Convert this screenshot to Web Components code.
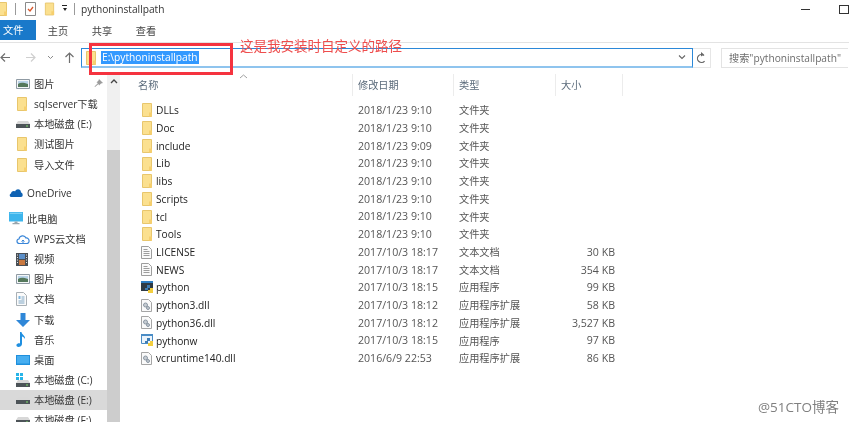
<!DOCTYPE html>
<html lang="zh">
<head>
<meta charset="utf-8">
<title>pythoninstallpath</title>
<style>
html, body { margin: 0; height: 422px; overflow: hidden; background: #fff; }
body { font: 10.200px/1 "Open Sans", "Noto Sans CJK SC", sans-serif; color: #222; }
</style>
</head>
<body>
<x-explorer>
  <x-titlebar slot="top">pythoninstallpath</x-titlebar>
  <x-tabs slot="top"></x-tabs>
  <x-address slot="top"></x-address>
  <x-nav slot="nav">
    <x-nav-item icon="pictures">图片<x-pin slot="end"></x-pin></x-nav-item>
    <x-nav-item icon="folder">sqlserver下载</x-nav-item>
    <x-nav-item icon="drive">本地磁盘 (E:)</x-nav-item>
    <x-nav-item icon="folder">测试图片</x-nav-item>
    <x-nav-item icon="folder">导入文件</x-nav-item>
    <x-nav-item icon="onedrive" level="0" gap="8">OneDrive</x-nav-item>
    <x-nav-item icon="pc" level="0" gap="6">此电脑</x-nav-item>
    <x-nav-item icon="cloud">WPS云文档</x-nav-item>
    <x-nav-item icon="video">视频</x-nav-item>
    <x-nav-item icon="pictures">图片</x-nav-item>
    <x-nav-item icon="docs">文档</x-nav-item>
    <x-nav-item icon="download">下载</x-nav-item>
    <x-nav-item icon="music">音乐</x-nav-item>
    <x-nav-item icon="desktop">桌面</x-nav-item>
    <x-nav-item icon="sysdrive">本地磁盘 (C:)</x-nav-item>
    <x-nav-item icon="drive" selected>本地磁盘 (E:)</x-nav-item>
    <x-nav-item icon="drive">本地磁盘 (F:)</x-nav-item>
  </x-nav>
  <x-files slot="main">
    <x-file icon="folder" date="2018/1/23 9:10" type="文件夹">DLLs</x-file>
    <x-file icon="folder" date="2018/1/23 9:10" type="文件夹">Doc</x-file>
    <x-file icon="folder" date="2018/1/23 9:09" type="文件夹">include</x-file>
    <x-file icon="folder" date="2018/1/23 9:10" type="文件夹">Lib</x-file>
    <x-file icon="folder" date="2018/1/23 9:10" type="文件夹">libs</x-file>
    <x-file icon="folder" date="2018/1/23 9:10" type="文件夹">Scripts</x-file>
    <x-file icon="folder" date="2018/1/23 9:10" type="文件夹">tcl</x-file>
    <x-file icon="folder" date="2018/1/23 9:10" type="文件夹">Tools</x-file>
    <x-file icon="text" date="2017/10/3 18:17" type="文本文档" size="30 KB">LICENSE</x-file>
    <x-file icon="text" date="2017/10/3 18:17" type="文本文档" size="354 KB">NEWS</x-file>
    <x-file icon="python" date="2017/10/3 18:15" type="应用程序" size="99 KB">python</x-file>
    <x-file icon="dll" date="2017/10/3 18:12" type="应用程序扩展" size="58 KB">python3.dll</x-file>
    <x-file icon="dll" date="2017/10/3 18:12" type="应用程序扩展" size="3,527 KB">python36.dll</x-file>
    <x-file icon="pythonw" date="2017/10/3 18:15" type="应用程序" size="97 KB">pythonw</x-file>
    <x-file icon="dll" date="2016/6/9 22:53" type="应用程序扩展" size="86 KB">vcruntime140.dll</x-file>
  </x-files>
  <x-note slot="over">这是我安装时自定义的路径</x-note>
  <x-watermark slot="over">@51CTO博客</x-watermark>
</x-explorer>

<script>
'use strict';

const FOLDER = '<path d="M1.5 .5h9v13h-9z" fill="#fbe08f" stroke="#e8c66c"/><path d="M8 9.5h3v4H8z" fill="#f6cf6e"/>';

const ICONS = {
    folder: [12, 14, FOLDER],
    pictures: [14, 12, '<path d="M.5 1.5h13v9H.5z" fill="#f3f6f8" stroke="#8f9aa3"/><path d="M2 3h10v3H2z" fill="#b9d3e8"/><path d="M2 6c3-2 6-1 10 0v3H2z" fill="#55795c"/>'],
    drive: [14, 8, '<path d="M2 1h10l2 3H0z" fill="#d8d8d8"/><path d="M0 4h14v4H0z" fill="#4d5458"/><path d="M10 5.500h2v1h-2z" fill="#7fdc6a"/>'],
    sysdrive: [14, 14, '<path d="M0 0h3v3H0zM4 0h3v3H4zM0 4h3v3H0zM4 4h3v3H4z" fill="#27b4e8"/><path d="M2 7h10l2 3H0z" fill="#d8d8d8"/><path d="M0 10h14v4H0z" fill="#4d5458"/><path d="M10 11.500h2v1h-2z" fill="#7fdc6a"/>'],
    onedrive: [14, 9, '<path d="M2.500 9C.5 9 0 6.200 2 5.500 2.500 3 5 2.500 6 3.500 7.500 0 12 1 12 4.500c2 .2 2.500 4.500 0 4.500z" fill="#0f62b3"/>'],
    pc: [14, 13, '<path d="M0 0h14v9.500H0z" fill="#3db5ec"/><path d="M.8 .8h12.400v1H.8z" fill="#8ad7f7"/><path d="M5.500 9.500h3V11h-3zM3.500 11h7v1.200h-7z" fill="#9aa6ad"/>'],
    cloud: [14, 12, '<path d="M3.500 10.500C.5 10.500 0 6.500 3 6c.5-3.500 5.500-4.500 7-1 3.500-.5 4.500 5.500 .5 5.500z" fill="#fff" stroke="#3a86d8" stroke-width="1.200"/><path d="M7 11V7M5.500 8.500 7 7l1.500 1.500" fill="none" stroke="#3a86d8"/>'],
    video: [12, 13, '<path d="M0 0h12v13H0z" fill="#4a4f55"/><path d="M3 1h6v5H3z" fill="#5b8fc9"/><path d="M3 7h6v5H3z" fill="#c9783f"/><path d="M1 1.500h1v1H1zM1 4h1v1H1zM1 6.500h1v1H1zM1 9h1v1H1zM10 1.500h1v1h-1zM10 4h1v1h-1zM10 6.500h1v1h-1zM10 9h1v1h-1z" fill="#dfe3e6"/>'],
    docs: [11, 14, '<path d="M.5 .5h7l3 3v10H.5z" fill="#fbfbfb" stroke="#a9b0b5"/><path d="M2.500 4h2v3h-2z" fill="#7fb5dd"/><path d="M5.500 5h3M5.500 7h3M2.500 9h6M2.500 11h6" stroke="#7fa6c4"/>'],
    download: [14, 14, '<path d="M4.500 0h5v7H14l-7 7-7-7h4.500z" fill="#2f87d8"/>'],
    music: [10, 15, '<path d="M4 0h1.500c.3 3 4 3.500 3.500 7-.8-1.500-2-2.200-3-2.500V12c0 2-2 3-3.500 3S0 14 .5 12.800C1 11.500 3 11 4 11.500z" fill="#1f8fe0"/>'],
    desktop: [14, 10, '<path d="M0 0h14v10H0z" fill="#1f8fdc"/><path d="M1 1h12v7.500H1z" fill="#47aef0"/>'],
    text: [11, 13, '<path d="M.5 .5h7l3 3v9H.5z" fill="#fafafa" stroke="#9d9d9d"/><path d="M2.500 3.500h4M2.500 5.500h6M2.500 7.500h6M2.500 9.500h6" stroke="#9d9d9d"/>'],
    dll: [11, 13, '<path d="M.5 .5h7l3 3v9H.5z" fill="#fafafa" stroke="#a5a5a5"/><circle cx="4.500" cy="6" r="2" fill="#c6ccd2" stroke="#8b97a3"/><circle cx="7" cy="9" r="1.500" fill="#c6ccd2" stroke="#8b97a3"/>'],
    python: [13, 13, '<path d="M0 0h12v10H0z" fill="#2f3b44"/><path d="M0 0h12v2H0z" fill="#2f7fc4"/><path d="M6 4h3v3H7v2H4V7h2z" fill="#3d7cb4"/><path d="M9 7h3v5H7V9h2z" fill="#f3ce3f"/>'],
    pythonw: [13, 13, '<path d="M.5 .5h11v9H.5z" fill="#eaf3fb" stroke="#4a8cc5"/><path d="M0 0h12v2H0z" fill="#4a8cc5"/><path d="M6 4h3v3H7v2H4V7h2z" fill="#3d7cb4"/><path d="M9 7h3v5H7V9h2z" fill="#f3ce3f"/>'],
};

function icon_svg(name) {
    const [w, h, body] = ICONS[name];
    return `<svg width="${w}" height="${h}" viewBox="0 0 ${w} ${h}" aria-hidden="true">${body}</svg>`;
}

// every element below is the same shape: markup + style in an open shadow root
function define(tag, render) {
    customElements.define(
        tag,
        class extends HTMLElement {
            connectedCallback() {
                if (this.shadowRoot) return;
                this.attachShadow({ mode: 'open' }).innerHTML = render(this);
            }
        }
    );
}

define('x-explorer', () => `
<style>
:host { display: block; position: relative; width: 849px; height: 422px; overflow: hidden; filter: blur(.3px); }
.body { display: flex; height: 348px; }
</style>
<slot name="top"></slot>
<div class="body"><slot name="nav"></slot><slot name="main"></slot></div>
<slot name="over"></slot>`);

define('x-titlebar', () => `
<style>
:host { display: flex; align-items: center; height: 18px; color: #333; }
.sep { width: 1px; height: 12px; background: #9a9a9a; }
.caret { width: 5px; height: 2px; border-top: 1px solid #222; }
.arrow { width: 0; height: 0; border: 2.500px solid transparent; border-top: 3px solid #222; }
.min { width: 9px; height: 1px; background: #333; margin-left: auto; }
.max { width: 8px; height: 7px; border: 1px solid #333; margin: 0 0 0 29px; flex: none; }
svg { flex: none; display: block; }
</style>
<svg width="9" height="14" viewBox="3 0 9 14" style="margin-left:-1px">${FOLDER}</svg>
<span class="sep" style="margin-left:7px"></span>
<svg width="11" height="14" viewBox="0 0 11 14" style="margin-left:9px"><path d="M.5 .5h10v13H.5z" fill="#fff" stroke="#8a8a8a"/><path d="M3 7l2 2 3-4" fill="none" stroke="#d9572b" stroke-width="1.300"/></svg>
<svg width="11" height="14" viewBox="0 0 12 14" style="margin-left:8px">${FOLDER}</svg>
<span style="margin-left:7px;display:flex;flex-direction:column;align-items:center"><span class="caret"></span><span class="arrow"></span></span>
<span class="sep" style="margin-left:7px"></span>
<span style="margin-left:6px"><slot></slot></span>
<span class="min"></span><span class="max"></span>`);

define('x-tabs', () => `
<style>
:host { display: flex; align-items: stretch; height: 24px; border-bottom: 1px solid #e3e3e3; color: #444; }
.file { width: 36px; height: 20px; margin-top: 2px; background: #1979ca; color: #fff; display: flex; align-items: center; padding-left: 3px; box-sizing: border-box; }
.tab { width: 44px; display: flex; align-items: center; justify-content: center; padding-top: 2px; height: 22px; }
</style>
<div class="file">文件</div>
<div class="tab">主页</div>
<div class="tab">共享</div>
<div class="tab">查看</div>`);

define('x-address', () => `
<style>
:host { display: flex; align-items: center; height: 31px; box-sizing: border-box; padding-bottom: 1px; }
.nav { width: 81px; flex: none; display: flex; align-items: center; height: 20px; position: relative; }
.nav svg { position: absolute; }
.box { flex: none; width: 612px; height: 20px; box-sizing: border-box; border: 1px solid #2b88d8; border-bottom: 2px solid #8fc4ee; display: flex; align-items: center; justify-content: space-between; padding: 0 6px 0 3px; }
.path { display: flex; align-items: center; gap: 4px; }
.sel { background: #3399ff; color: #fff; padding: 0 1px; height: 13px; line-height: 13px; }
.refresh { flex: none; width: 18px; height: 20px; border: 1px solid #e6e6e6; border-left: 0; box-sizing: border-box; display: flex; align-items: center; justify-content: center; }
.search { flex: none; margin-left: 10px; width: 127px; height: 20px; border: 1px solid #e3e3e3; border-right: 0; box-sizing: border-box; padding-left: 7px; display: flex; align-items: center; color: #6d6d6d; white-space: nowrap; }
</style>
<div class="nav">
  <svg style="left:0;top:4px" width="11" height="11" viewBox="0 0 11 11"><path d="M10 5.500H1M5 1.500l-4 4 4 4" fill="none" stroke="#6f6f6f" stroke-width="1.200"/></svg>
  <svg style="left:25px;top:4px" width="11" height="11" viewBox="0 0 11 11"><path d="M1 5.500h9M6 1.500l4 4-4 4" fill="none" stroke="#cfcfcf" stroke-width="1.200"/></svg>
  <svg style="left:47px;top:7px" width="7" height="5" viewBox="0 0 7 5"><path d="M1 1l2.500 2.500L6 1" fill="none" stroke="#8a8a8a"/></svg>
  <svg style="left:64px;top:4px" width="11" height="11" viewBox="0 0 11 11"><path d="M5.500 11V1M1.500 5l4-4 4 4" fill="none" stroke="#6f6f6f" stroke-width="1.200"/></svg>
</div>
<div class="box">
  <div class="path">
    <svg width="12" height="14" viewBox="0 0 12 14">${FOLDER}</svg>
    <span class="sel">E:\\pythoninstallpath</span>
  </div>
  <svg width="8" height="5" viewBox="0 0 8 5"><path d="M1 .5l3 3 3-3" fill="none" stroke="#666" stroke-width="1.100"/></svg>
</div>
<div class="refresh"><svg width="11" height="12" viewBox="0 0 11 12"><path d="M5.500 2.500a4 4 0 1 0 4 4" fill="none" stroke="#666" stroke-width="1.200" transform="rotate(40 5.500 6.500)"/><path d="M5 0l3 2.500L5 4.500z" fill="#666"/></svg></div>
<div class="search">搜索"pythoninstallpath"</div>`);

define('x-nav', () => `
<style>
:host { display: flex; flex: none; width: 120px; height: 348px; }
.items { width: 107px; overflow: hidden; }
.bar { width: 13px; background: #f0f0f0; position: relative; }
.bar svg { position: absolute; left: 3px; top: 5px; }
.thumb { position: absolute; left: 0; right: 0; top: 76px; bottom: 0; background: #cdcdcd; }
</style>
<div class="items"><slot></slot></div>
<div class="bar"><svg width="8" height="5" viewBox="0 0 8 5"><path d="M1 4l3-3 3 3" fill="none" stroke="#444" stroke-width="1.300"/></svg><div class="thumb"></div></div>`);

define('x-nav-item', el => {
    const top_level = el.getAttribute('level') === '0';
    const gap = el.getAttribute('gap') || 0;
    const bg = el.hasAttribute('selected') ? '#d9d9d9' : 'transparent';
    return `
<style>
:host { display: flex; align-items: center; height: 20.150px; margin-top: ${gap}px; background: ${bg}; color: #333; white-space: nowrap; position: relative; }
.ic { flex: none; width: ${top_level ? 27 : 34}px; padding-left: ${top_level ? 9 : 16}px; box-sizing: border-box; display: flex; align-items: center; }
svg { display: block; }
::slotted([slot=end]) { position: absolute; right: 4px; top: 5px; }
</style>
<span class="ic">${icon_svg(el.getAttribute('icon'))}</span><slot></slot><slot name="end"></slot>`;
});

define('x-pin', () => `
<style>:host { display: block; width: 9px; height: 9px; }</style>
<svg width="9" height="9" viewBox="0 0 9 9"><path d="M5 0l4 4-2 .5-2 2-.5-1.500L1 8 .5 7.500 4 4 2.500 3.500l2-2z" fill="#9b9b9b"/></svg>`);

define('x-files', () => `
<style>
:host { display: block; flex: none; width: 729px; }
.head { display: grid; grid-template-columns: 233px 101px 102px 67px; height: 22px; margin-bottom: 5.500px; color: #5b6b7b; position: relative; }
.head div { display: flex; align-items: center; padding-left: 5px; box-sizing: border-box; border-right: 1px solid #ececec; }
.head div:first-child { padding-left: 18px; }
.sort { position: absolute; left: 119px; top: 0; }
</style>
<div class="head">
  <div>名称</div><div>修改日期</div><div>类型</div><div>大小</div>
  <svg class="sort" width="9" height="5" viewBox="0 0 9 5"><path d="M1 4l3.500-3L8 4" fill="none" stroke="#a0a0a0"/></svg>
</div>
<slot></slot>`);

define('x-file', el => `
<style>
:host { display: grid; grid-template-columns: 232px 101px 102px 60px; align-items: center; height: 17.720px; color: #555; white-space: nowrap; }
.name { display: flex; align-items: center; color: #222; }
.ic { flex: none; width: 36px; padding-left: 21px; box-sizing: border-box; display: flex; }
.date { padding-left: 6px; font-size: 10.600px; }
.type { padding-left: 6px; }
.size { text-align: right; font-size: 10.600px; }
</style>
<div class="name"><span class="ic">${icon_svg(el.getAttribute('icon'))}</span><slot></slot></div>
<div class="date">${el.getAttribute('date')}</div>
<div class="type">${el.getAttribute('type')}</div>
<div class="size">${el.getAttribute('size') || ''}</div>`);

define('x-note', () => `
<style>
:host { display: block; position: absolute; left: 89px; top: 43px; width: 144px; height: 32px; box-sizing: border-box; border: 3px solid #f5333f; }
span { position: absolute; left: 148px; top: -9px; font-size: 13.500px; line-height: 18px; color: #ee4d4d; white-space: nowrap; }
</style>
<span><slot></slot></span>`);

define('x-watermark', () => `
<style>
:host { display: block; position: absolute; left: 758px; top: 400px; font-size: 13.500px; line-height: 15px; color: #7f7f7f; white-space: nowrap; }
</style>
<slot></slot>`);
</script>
</body>
</html>
